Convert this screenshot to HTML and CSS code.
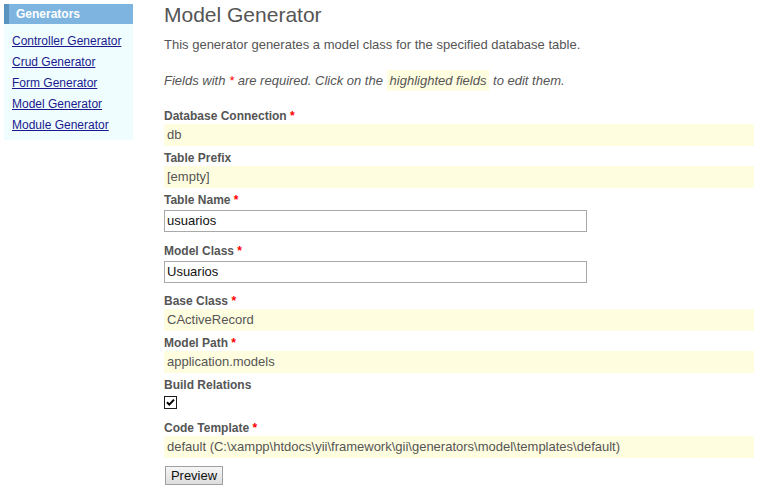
FILE: index.html
```html
<!DOCTYPE html>
<html>
<head>
<meta charset="utf-8">
<title>Model Generator</title>
<link rel="stylesheet" href="styles.css">
</head>
<body>
<div class="page">
  <div class="sidebar">
    <div class="side-head">Generators</div>
    <div class="side-body">
      <a href="#" class="side-link">Controller Generator</a>
      <a href="#" class="side-link">Crud Generator</a>
      <a href="#" class="side-link">Form Generator</a>
      <a href="#" class="side-link">Model Generator</a>
      <a href="#" class="side-link">Module Generator</a>
    </div>
  </div>
  <div class="main">
    <h1 class="title">Model Generator</h1>
    <p class="desc">This generator generates a model class for the specified database table.</p>
    <p class="note">Fields with <span class="req">*</span> are required. Click on the <span class="hl">highlighted fields</span> to edit them.</p>

    <div class="form">
      <div class="row sticky-row">
        <div class="label">Database Connection <span class="req">*</span></div>
        <div class="sticky">db</div>
      </div>
      <div class="row sticky-row">
        <div class="label">Table Prefix</div>
        <div class="sticky">[empty]</div>
      </div>
      <div class="row input-row input-row-first">
        <div class="label">Table Name <span class="req">*</span></div>
        <div class="input">usuarios</div>
      </div>
      <div class="row input-row">
        <div class="label">Model Class <span class="req">*</span></div>
        <div class="input">Usuarios</div>
      </div>
      <div class="row sticky-row">
        <div class="label">Base Class <span class="req">*</span></div>
        <div class="sticky">CActiveRecord</div>
      </div>
      <div class="row sticky-row">
        <div class="label">Model Path <span class="req">*</span></div>
        <div class="sticky">application.models</div>
      </div>
      <div class="row check-row">
        <div class="label">Build Relations</div>
        <span class="checkbox"><svg width="11" height="11" viewBox="0 0 11 11"><path d="M2 5.2 L4.3 7.6 L9 2.6" fill="none" stroke="#000" stroke-width="2"/></svg></span>
      </div>
      <div class="row sticky-row">
        <div class="label">Code Template <span class="req">*</span></div>
        <div class="sticky">default (C:\xampp\htdocs\yii\framework\gii\generators\model\templates\default)</div>
      </div>
      <div class="buttons">
        <button class="btn">Preview</button>
      </div>
    </div>
  </div>
</div>
</body>
</html>
```

FILE: styles.css
```css
html, body {
  margin: 0;
  padding: 0;
  background: #fff;
}
body {
  font-family: "Liberation Sans", Arial, sans-serif;
  font-size: 13px;
  color: #555;
}
.page {
  display: flex;
  align-items: flex-start;
  padding: 4px 10px 0 4px;
}
.sidebar {
  flex: none;
  width: 129px;
}
.side-head {
  height: 20px;
  line-height: 20px;
  background: #7db5e0;
  border-left: 5px solid #5b93bf;
  padding-left: 7px;
  color: #fff;
  font-weight: bold;
  font-size: 12px;
}
.side-body {
  background: #effdff;
  padding: 7px 0 4px 8px;
}
.side-link {
  display: block;
  line-height: 21px;
  font-size: 12px;
  color: #1a1a8e;
  text-decoration: underline;
}
.main {
  flex: 1;
  margin-left: 31px;
  min-width: 0;
}
.title {
  margin: 0;
  font-size: 21px;
  font-weight: normal;
  line-height: 22px;
  color: #555;
}
.desc {
  margin: 11px 0 0;
  line-height: 16px;
}
.note {
  margin: 20px 0 0;
  line-height: 16px;
  font-style: italic;
}
.req {
  color: #f00;
}
.hl {
  background: #fffde0;
  padding: 3px;
}
.form {
  margin-top: 19px;
}
.label {
  font-weight: bold;
  font-size: 12px;
  line-height: 16px;
}
.sticky-row {
  margin-bottom: 4px;
}
.sticky {
  background: #fffde0;
  height: 22px;
  line-height: 22px;
  padding-left: 3px;
  white-space: nowrap;
  overflow: hidden;
}
.input-row {
  margin-bottom: 10px;
}
.input-row-first {
  margin-bottom: 11px;
}
.input {
  margin-top: 2px;
  box-sizing: border-box;
  width: 423px;
  height: 22px;
  line-height: 20px;
  border: 1px solid #a9a9a9;
  padding-left: 2px;
  color: #111;
}
.check-row {
  margin-bottom: 11px;
}
.checkbox {
  display: block;
  box-sizing: border-box;
  width: 13px;
  height: 13px;
  margin-top: 3px;
  border: 1px solid #1c1c1c;
  background: #fff;
}
.checkbox svg {
  display: block;
}
.buttons {
  margin-top: 8px;
  padding-left: 1px;
}
.btn {
  display: block;
  box-sizing: border-box;
  font-family: "Liberation Sans", Arial, sans-serif;
  font-size: 13px;
  line-height: 17px;
  color: #111;
  width: 58px;
  height: 19px;
  padding: 0;
  border: 1px solid #a0a0a0;
  background: linear-gradient(#f6f6f6, #dddddd);
  border-radius: 0;
}
```
